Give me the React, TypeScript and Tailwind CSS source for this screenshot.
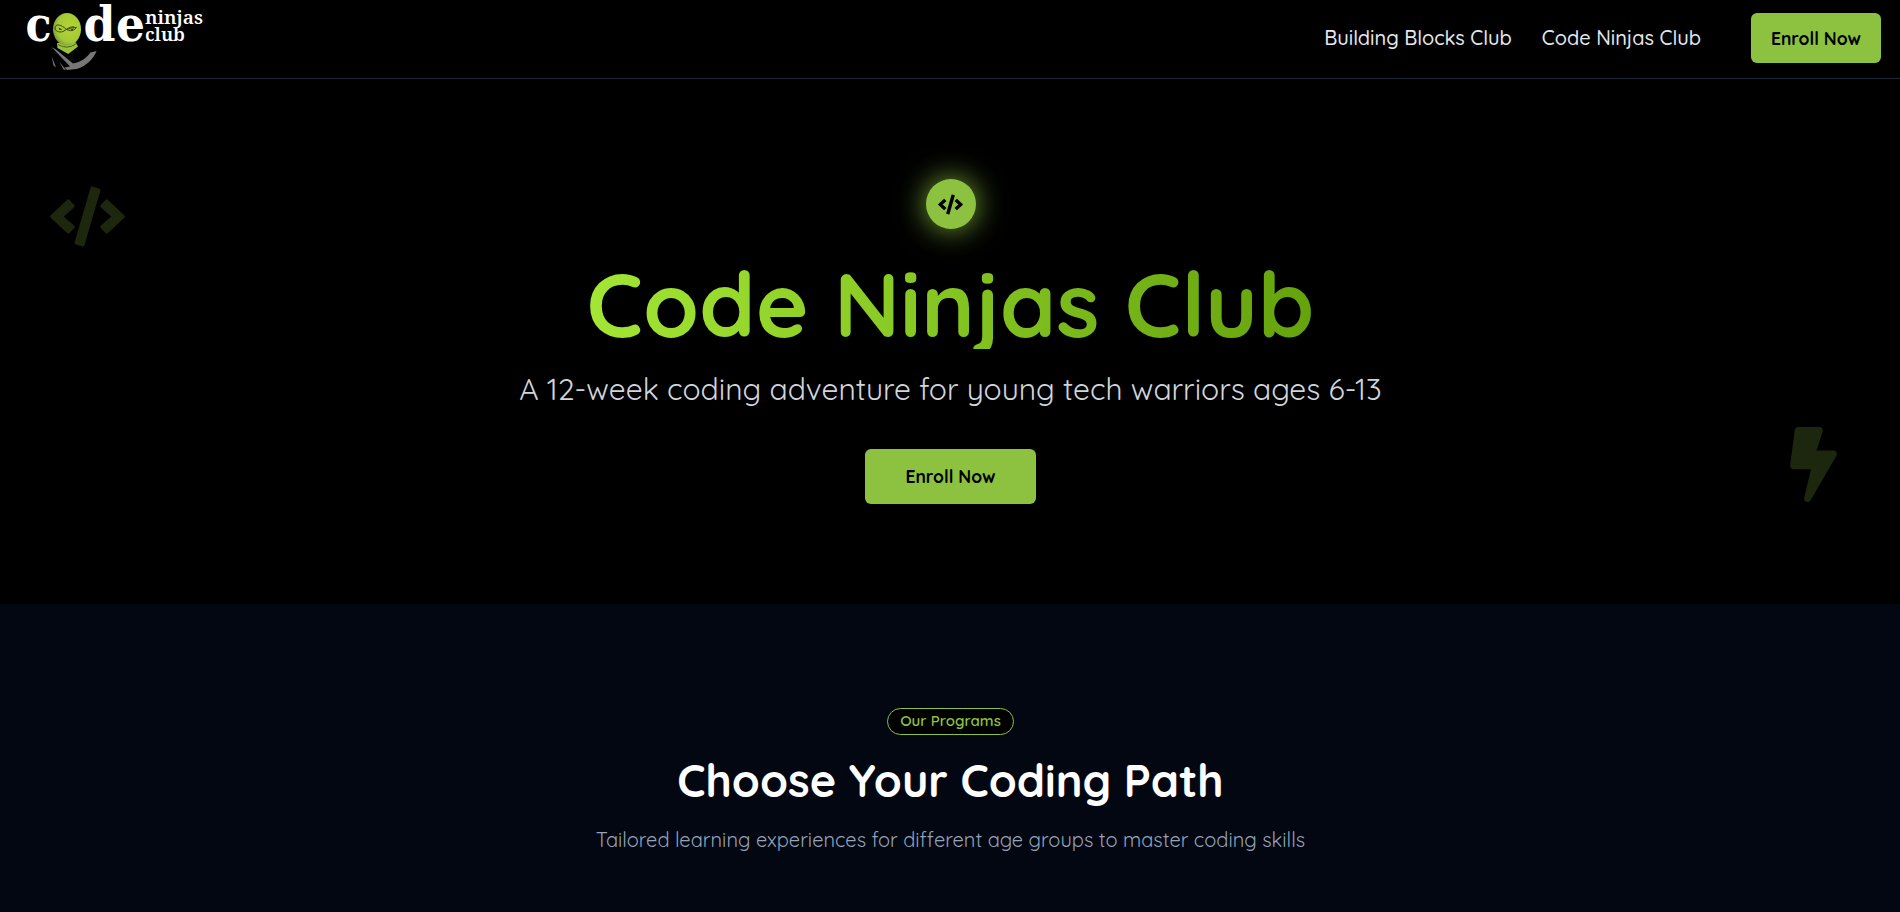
import { FaBolt, FaCode } from "react-icons/fa";

function Logo() {
  return (
    <svg width="210" height="78" viewBox="0 0 210 78" role="img" aria-label="Code Ninjas Club">
      <defs>
        <radialGradient id="mask" cx="0.6" cy="0.45" r="0.6">
          <stop offset="0" stopColor="#b5d335" />
          <stop offset="0.75" stopColor="#a4c936" />
          <stop offset="1" stopColor="#7d9c3a" />
        </radialGradient>
      </defs>
      <g fill="#fff" fontFamily="'DejaVu Serif',serif" fontWeight="700">
        <text x="25.5" y="41" fontSize="49" textLength="26" lengthAdjust="spacingAndGlyphs">c</text>
        <text x="83.5" y="41" fontSize="49" textLength="32" lengthAdjust="spacingAndGlyphs">d</text>
        <text x="116" y="41" fontSize="49" textLength="29" lengthAdjust="spacingAndGlyphs">e</text>
      </g>
      <g fill="#fff" fontFamily="'Noto Serif','DejaVu Serif',serif" fontWeight="600">
        <text x="145" y="24" fontSize="18" textLength="58" lengthAdjust="spacingAndGlyphs">ninjas</text>
        <text x="145" y="41" fontSize="18" textLength="40" lengthAdjust="spacingAndGlyphs">club</text>
      </g>
      <path d="M57 43 L57.5 48 L68.3 54 L78 46.5 L75.5 42Z" fill="#9cc238" />
      <path d="M58 44.5 Q67 50 76 44" fill="none" stroke="#4d6420" strokeWidth="1" />
      <ellipse cx="67" cy="29.2" rx="14" ry="16.2" fill="url(#mask)" />
      <path d="M74 26.8 C69 26.5 67 29.5 63 31.5 C59 33 55 31 55 28 C55.5 23.5 60 24.5 64 27.5 C68 31 73 32.5 76.5 27.3 C72 27.5 69 28.5 67 29.5" fill="none" stroke="#3a4a18" strokeWidth="1" />
      <path d="M58.5 27.5 L62.5 29.5 L59.5 30Z M70 29.8 L74 28.3 L72.5 30.2Z" fill="#2c3a10" />
      <path d="M51.5 47 L56 49.5 L73 63.5 C82 62 87 57 90.5 52.5 L96.5 51 C94 58 87 66 76.5 69 L67 70 L64.5 67.5 L70 66.5Z" fill="#777" />
      <path d="M58 49 L68.5 56 L72.5 52 L76 61.5 L72 62Z" fill="#090909" />
      <path d="M51.5 56 L56 67.5 L53.5 65.5Z M59.5 62 L66 70 L63.5 69.5Z" fill="#777" />
    </svg>
  );
}

export default function App() {
  return (
    <div className="min-h-[912px] overflow-hidden bg-black font-['Quicksand','Lato',sans-serif]">
      <header className="flex h-[79px] items-start justify-between border-b border-[#1f2937] pr-[19px]">
        <Logo />
        <nav className="flex items-center pt-[13px] text-xl font-medium text-[#e5e7eb]">
          <a className="mr-[30px]">Building Blocks Club</a>
          <a className="mr-[50px]">Code Ninjas Club</a>
          <button className="h-[50px] w-[130px] rounded-md bg-[#8cc23f] text-[17.5px] font-bold text-black">Enroll Now</button>
        </nav>
      </header>
      <section className="relative flex h-[525px] flex-col items-center pl-px pt-[100px]">
        <FaCode className="absolute left-[50px] top-[100px] size-[75px] text-[#1c270d]" />
        <FaBolt className="absolute right-[49px] top-[348px] size-[75px] text-[#1c270d]" />
        <div className="flex size-[50px] items-center justify-center rounded-full bg-[#8cc23f] shadow-[0_0_30px_#8cc23fe6]">
          <FaCode className="size-[25px] text-black" />
        </div>
        <h1 className="mt-[30px] bg-[linear-gradient(to_right,#a3e635,#65a30d)] bg-clip-text text-[90px] font-bold leading-[90px] text-transparent">Code Ninjas Club</h1>
        <p className="mt-[18px] text-[30px] leading-[45px] text-[#d1d5db]">A 12-week coding adventure for young tech warriors ages 6-13</p>
        <button className="mt-[37px] h-[55px] w-[171px] rounded-md bg-[#8cc23f] text-[17.5px] font-bold">Enroll Now</button>
      </section>
      <section className="flex h-[308px] flex-col items-center bg-[#030712] pl-px pt-[104px]">
        <span className="flex h-[27px] w-[127px] items-center justify-center whitespace-nowrap rounded-full border border-[#8cc23f] bg-black text-[15px] font-semibold text-[#8cc23f]">Our Programs</span>
        <h2 className="mt-5 text-[45px] font-bold leading-[50px] text-white">Choose Your Coding Path</h2>
        <p className="mt-[21px] text-xl text-[#94a3b8]">Tailored learning experiences for different age groups to master coding skills</p>
      </section>
    </div>
  );
}
